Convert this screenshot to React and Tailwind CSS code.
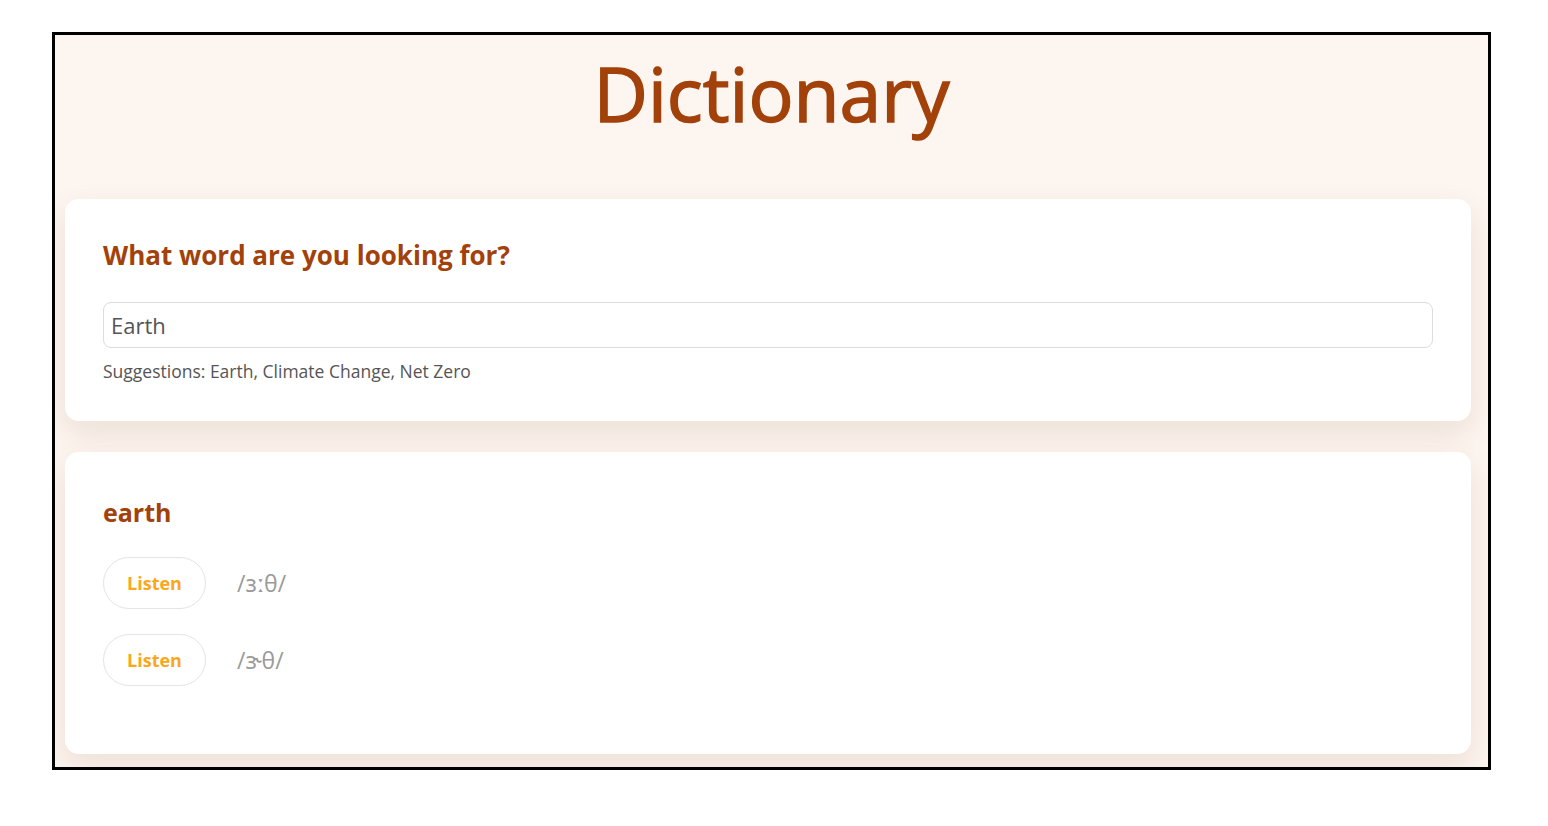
const PHONETICS = [
  { text: '/ɜːθ/' },
  { text: '/ɝθ/' },
]

function ListenRow({ p }) {
  return (
    <div className="flex items-center gap-[31px]">
      <button className="w-[103px] h-[52px] rounded-full border border-[#e4e4e4] bg-white text-[18px] font-bold text-[#fba71b]">
        Listen
      </button>
      <span className="text-[23px] text-[#9a9a9a]">{p.text}</span>
    </div>
  )
}

export default function App() {
  return (
    <div className="min-h-[826px] bg-white" style={{ fontFamily: '"Open Sans", "Noto Sans", sans-serif' }}>
      <div className="ml-[52px] pt-[32px]">
        <div className="w-[1439px] h-[738px] border-[3px] border-black overflow-hidden bg-[#fdf5f0]">
          <h1 className="text-center text-[75px] leading-none font-medium [-webkit-text-stroke:1.5px_#a2410a] text-[#a2410a] pt-[21px] h-[164px]">
            Dictionary
          </h1>

          <div className="pl-[10px] pr-[17px] flex flex-col gap-[31px]">
            <section className="bg-white rounded-[14px] shadow-[0_12px_30px_rgba(140,100,60,0.14)] px-[38px] pt-[38px] h-[222px]">
              <h2 className="text-[26px] font-bold text-[#a2410a] leading-[36px]">What word are you looking for?</h2>
              <input
                readOnly
                value="Earth"
                className="mt-[29px] w-full h-[46px] rounded-[8px] border border-[#dcdcdc] px-[7px] text-[22px] text-[#555] outline-none"
              />
              <p className="mt-[10px] text-[17.5px] text-[#555]">Suggestions: Earth, Climate Change, Net Zero</p>
            </section>

            <section className="bg-white rounded-[14px] shadow-[0_12px_30px_rgba(140,100,60,0.14)] px-[38px] pt-[42px] h-[302px]">
              <h2 className="text-[25px] font-bold text-[#a2410a] leading-[36px]">earth</h2>
              <div className="mt-[27px] flex flex-col gap-[25px]">
                {PHONETICS.map((p, i) => (
                  <ListenRow key={i} p={p} />
                ))}
              </div>
            </section>
          </div>
        </div>
      </div>
    </div>
  )
}
